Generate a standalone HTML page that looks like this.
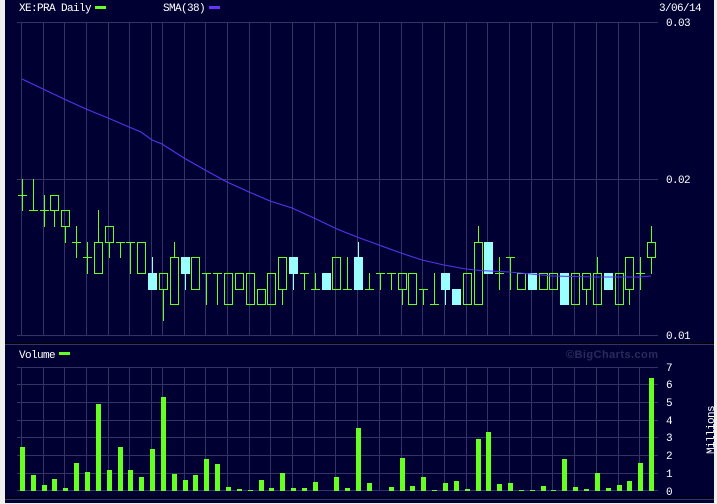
<!DOCTYPE html>
<html>
<head>
<meta charset="utf-8">
<title>XE:PRA Daily</title>
<style>
html,body{margin:0;padding:0;background:#eef0ee;width:717px;height:504px;overflow:hidden}
svg{display:block}
text{font-family:"Liberation Mono",monospace;font-size:11px;fill:#fff;letter-spacing:-.6px}
</style>
</head>
<body>
<svg width="717" height="504" viewBox="0 0 717 504" xmlns="http://www.w3.org/2000/svg">
<rect x="0" y="0" width="717" height="504" fill="#eef0ee"/>
<rect x="5" y="0" width="709" height="503" fill="#000033"/>
<rect x="5" y="343" width="709" height="1" fill="#000000"/>
<rect x="5" y="497" width="709" height="1" fill="#000000"/>

<g transform="translate(.5,.5)" fill="none" shape-rendering="crispEdges" stroke-linecap="square">
<path stroke="#333366" d="M17 22H657M17 179H657M17 335H657M5 344H713M5 499H713
M21 22V335M43 22V335M64 22V335M86 22V335M108 22V335M129 22V335M151 22V335M162 22V335M184 22V335M205 22V335M227 22V335M249 22V335M270 22V335M292 22V335M314 22V335M335 22V335M357 22V335M379 22V335M401 22V335M422 22V335M444 22V335M466 22V335M487 22V335M509 22V335M531 22V335M552 22V335M574 22V335M596 22V335M618 22V335M639 22V335
M17 367H657M17 384H657M17 402H657M17 420H657M17 437H657M17 455H657M17 473H657M17 490H657
M21 367V490M43 367V490M64 367V490M86 367V490M108 367V490M129 367V490M151 367V490M162 367V490M184 367V490M205 367V490M227 367V490M249 367V490M270 367V490M292 367V490M314 367V490M335 367V490M357 367V490M379 367V490M401 367V490M422 367V490M444 367V490M466 367V490M487 367V490M509 367V490M531 367V490M552 367V490M574 367V490M596 367V490M618 367V490M639 367V490"/>
<path stroke="#66ff22" d="M22 179V210M18 195H26M33 179V210M29 210H37M44 195V226M40 210H48
M50 195H58V210H50ZM54 210V226M61 210H69V226H61ZM65 226V242M76 226V257M72 242H80M87 242V273M83 257H91
M94 242H102V273H94ZM98 210V242M105 226H113V242H105ZM109 242V257M120 242V257M116 242H124M130 242V273M126 242H134
M137 242H145V273H137ZM159 273H167V289H159ZM163 289V320M170 257H178V304H170ZM174 242V257M191 257H199V289H191Z
M206 273V304M202 273H210M217 273V304M213 273H221M224 273H232V304H224ZM235 273H243V289H235Z
M246 273H254V304H246ZM257 289H265V304H257ZM267 273H275V304H267ZM278 257H286V289H278ZM282 289V304
M304 273V289M300 273H308M315 273V289M311 289H319M332 257H340V289H332ZM347 257V289M343 289H351
M369 273V289M365 289H373M380 273V289M376 273H384M391 273V289M387 273H395M398 273H406V289H398ZM402 289V304
M408 273H416V304H408ZM423 289V304M419 289H427M434 273V304M430 304H438M463 273H471V304H463Z
M474 242H482V304H474ZM478 226V242M499 257V289M495 273H503M510 257V289M506 257H514
M517 273H525V289H517ZM539 273H547V289H539ZM549 273H557V289H549ZM571 273H579V304H571Z
M582 273H590V289H582ZM586 289V304M593 273H601V304H593ZM597 257V273M615 273H623V304H615Z
M625 257H633V289H625ZM629 289V304M640 257V289M636 273H644M647 242H655V257H647ZM651 226V242M651 257V273"/>
<path stroke="#99ffff" d="M152 257V273M185 273V289M293 273V289M358 242V257M445 289V304"/>
</g>

<g fill="#99ffff" shape-rendering="crispEdges">
<rect x="148" y="273" width="9" height="17"/>
<rect x="181" y="257" width="9" height="17"/>
<rect x="289" y="257" width="9" height="17"/>
<rect x="322" y="273" width="9" height="17"/>
<rect x="354" y="257" width="9" height="33"/>
<rect x="441" y="273" width="9" height="17"/>
<rect x="452" y="289" width="9" height="16"/>
<rect x="484" y="242" width="9" height="32"/>
<rect x="528" y="273" width="9" height="17"/>
<rect x="560" y="273" width="9" height="32"/>
<rect x="604" y="273" width="9" height="17"/>
</g>

<polyline fill="none" stroke="#5533ee" stroke-width="1.1" points="22,79 43,89 64,99 86,109 108,118 129,127 141,132 152,140 162,144 184,158 205,170 227,182 249,192 270,201 292,208 314,218 337,229 357,237 379,245 401,253 422,260 444,265 466,269 480,270.5 509,272 531,274 552,276 574,276.5 596,277 618,277 639,277 651,276"/>

<g fill="#66ff22" shape-rendering="crispEdges">
<rect x="20" y="447" width="5" height="44"/>
<rect x="31" y="475" width="5" height="16"/>
<rect x="42" y="485" width="5" height="6"/>
<rect x="52" y="479" width="5" height="12"/>
<rect x="63" y="488" width="5" height="3"/>
<rect x="74" y="463" width="5" height="28"/>
<rect x="85" y="472" width="5" height="19"/>
<rect x="96" y="404" width="5" height="87"/>
<rect x="107" y="470" width="5" height="21"/>
<rect x="118" y="447" width="5" height="44"/>
<rect x="128" y="470" width="5" height="21"/>
<rect x="139" y="477" width="5" height="14"/>
<rect x="150" y="449" width="5" height="42"/>
<rect x="161" y="397" width="5" height="94"/>
<rect x="172" y="474" width="5" height="17"/>
<rect x="183" y="480" width="5" height="11"/>
<rect x="193" y="475" width="5" height="16"/>
<rect x="204" y="459" width="5" height="32"/>
<rect x="215" y="464" width="5" height="27"/>
<rect x="226" y="487" width="5" height="4"/>
<rect x="237" y="489" width="5" height="2"/>
<rect x="248" y="490" width="5" height="1"/>
<rect x="259" y="480" width="5" height="11"/>
<rect x="269" y="488" width="5" height="3"/>
<rect x="280" y="473" width="5" height="18"/>
<rect x="291" y="488" width="5" height="3"/>
<rect x="302" y="488" width="5" height="3"/>
<rect x="313" y="482" width="5" height="9"/>
<rect x="334" y="477" width="5" height="14"/>
<rect x="345" y="488" width="5" height="3"/>
<rect x="356" y="428" width="5" height="63"/>
<rect x="367" y="483" width="5" height="8"/>
<rect x="389" y="487" width="5" height="4"/>
<rect x="400" y="458" width="5" height="33"/>
<rect x="410" y="486" width="5" height="5"/>
<rect x="421" y="477" width="5" height="14"/>
<rect x="432" y="490" width="5" height="1"/>
<rect x="443" y="483" width="5" height="8"/>
<rect x="454" y="481" width="5" height="10"/>
<rect x="465" y="489" width="5" height="2"/>
<rect x="476" y="439" width="5" height="52"/>
<rect x="486" y="432" width="5" height="59"/>
<rect x="497" y="484" width="5" height="7"/>
<rect x="508" y="483" width="5" height="8"/>
<rect x="519" y="490" width="5" height="1"/>
<rect x="530" y="490" width="5" height="1"/>
<rect x="541" y="486" width="5" height="5"/>
<rect x="551" y="490" width="5" height="1"/>
<rect x="562" y="459" width="5" height="32"/>
<rect x="573" y="487" width="5" height="4"/>
<rect x="584" y="489" width="5" height="2"/>
<rect x="595" y="473" width="5" height="18"/>
<rect x="606" y="488" width="5" height="3"/>
<rect x="617" y="485" width="5" height="6"/>
<rect x="627" y="481" width="5" height="10"/>
<rect x="638" y="463" width="5" height="28"/>
<rect x="649" y="378" width="5" height="113"/>
<rect x="95" y="6" width="11" height="3"/>
<rect x="59" y="352" width="11" height="3"/>
</g>
<rect x="209" y="6" width="11" height="3" fill="#6633ff" shape-rendering="crispEdges"/>

<text x="19" y="11">XE:PRA Daily</text>
<text x="163" y="11">SMA(38)</text>
<text x="659" y="11">3/06/14</text>
<text x="666" y="26">0.03</text>
<text x="666" y="183">0.02</text>
<text x="666" y="339">0.01</text>
<text x="19" y="358">Volume</text>
<text x="566" y="358" textLength="92" lengthAdjust="spacing" style="font-family:'Liberation Sans',sans-serif;font-weight:bold;font-size:11px;fill:#2a2a5c;letter-spacing:0">©BigCharts.com</text>
<text x="666" y="371">7</text>
<text x="666" y="388">6</text>
<text x="666" y="406">5</text>
<text x="666" y="424">4</text>
<text x="666" y="441">3</text>
<text x="666" y="459">2</text>
<text x="666" y="477">1</text>
<text x="666" y="495">0</text>
<text transform="translate(714,454) rotate(-90)" x="0" y="0">Millions</text>
<rect x="714" y="0" width="3" height="504" fill="#eef0ee"/>
</svg>
</body>
</html>
